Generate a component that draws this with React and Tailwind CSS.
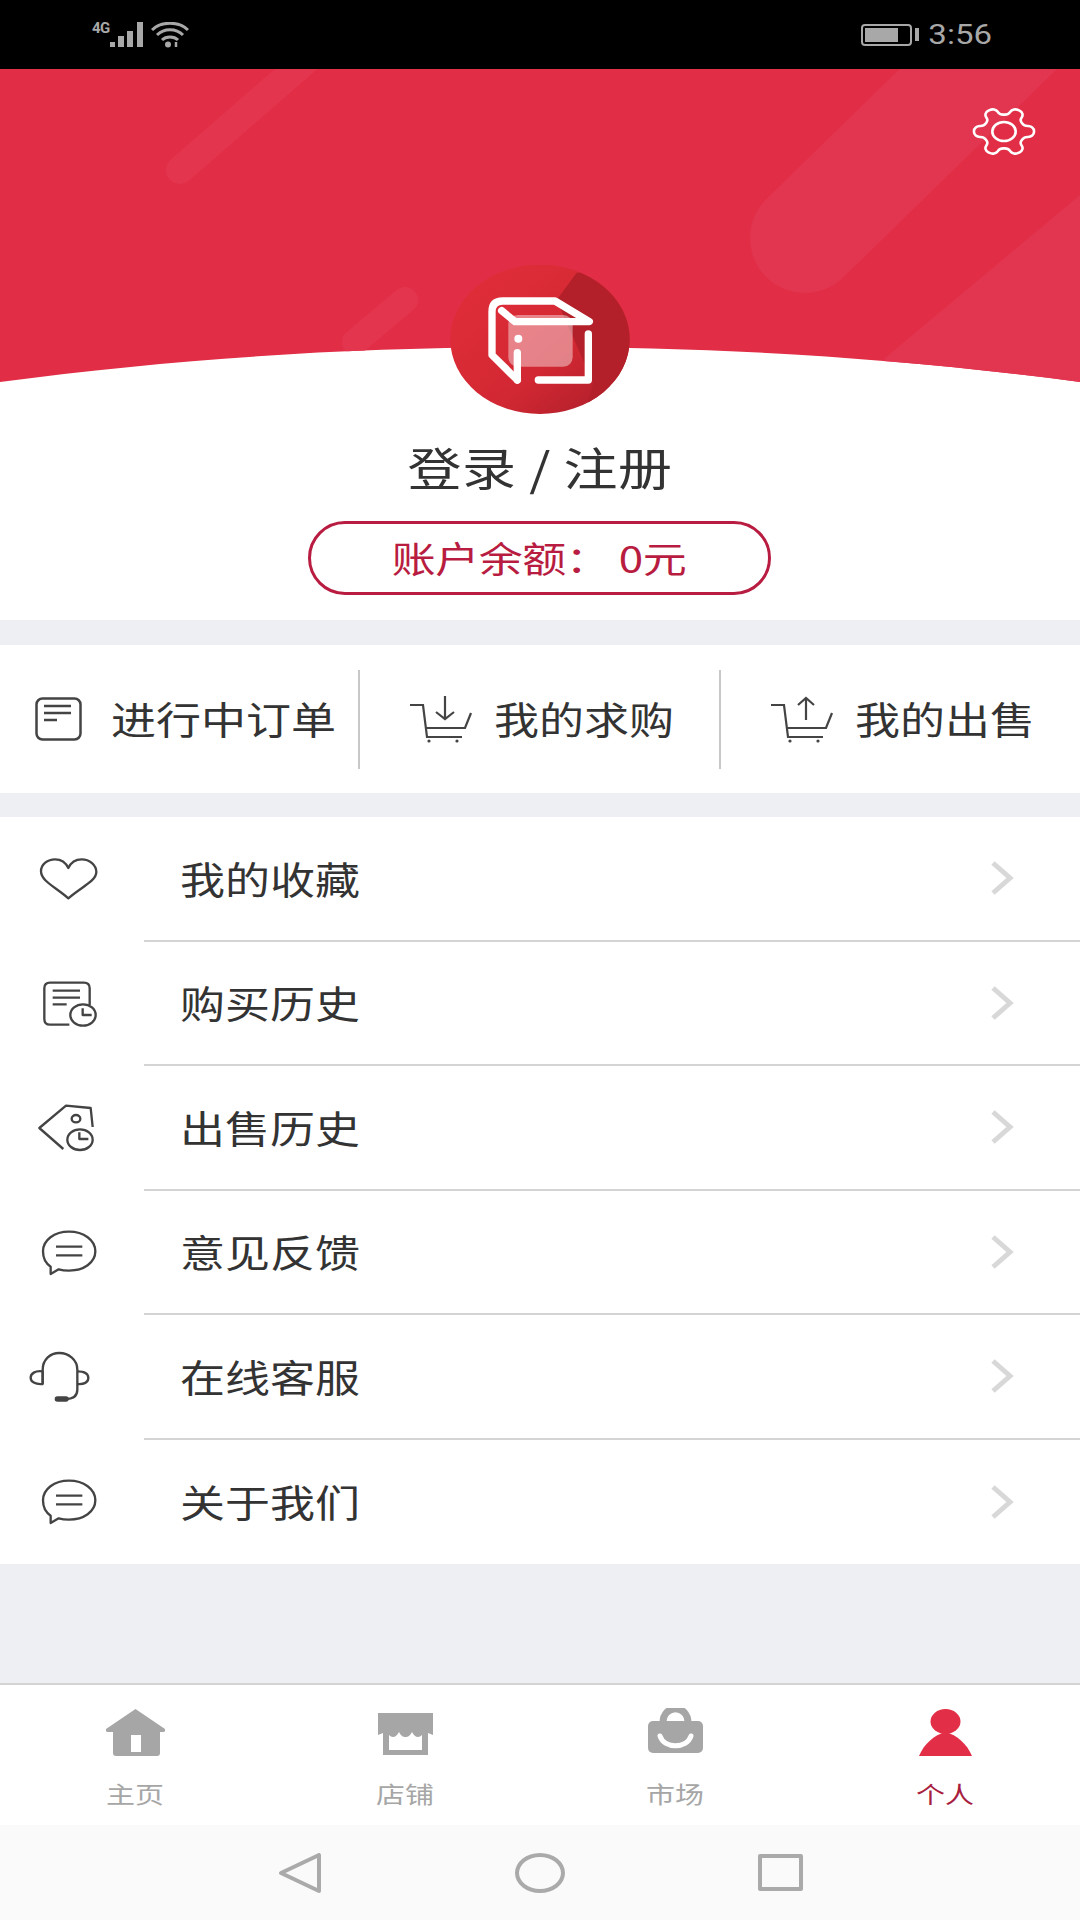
import React from 'react';

const GEAR = 'M12.22 2h-.44a2 2 0 0 0-2 2v.18a2 2 0 0 1-1 1.73l-.43.25a2 2 0 0 1-2 0l-.15-.08a2 2 0 0 0-2.73.73l-.22.38a2 2 0 0 0 .73 2.73l.15.1a2 2 0 0 1 1 1.72v.51a2 2 0 0 1-1 1.74l-.15.09a2 2 0 0 0-.73 2.73l.22.38a2 2 0 0 0 2.73.73l.15-.08a2 2 0 0 1 2 0l.43.25a2 2 0 0 1 1 1.73V20a2 2 0 0 0 2 2h.44a2 2 0 0 0 2-2v-.18a2 2 0 0 1 1-1.73l.43-.25a2 2 0 0 1 2 0l.15.08a2 2 0 0 0 2.73-.73l.22-.39a2 2 0 0 0-.73-2.73l-.15-.08a2 2 0 0 1-1-1.74v-.5a2 2 0 0 1 1-1.74l.15-.09a2 2 0 0 0 .73-2.73l-.22-.38a2 2 0 0 0-2.73-.73l-.15.08a2 2 0 0 1-2 0l-.43-.25a2 2 0 0 1-1-1.73V4a2 2 0 0 0-2-2z';

const BUBBLE = (
    <>
        <path d="M152 220 L152 198 C135 187 129 170 129 152 C129 118 163 93 207 93 C251 93 286 118 286 152 C286 186 251 210 207 210 C196 210 186 209 176 206 Z" />
        <path d="M168 138 H247 M168 164 H247" />
    </>
);

// row icons are drawn at 3x, the viewBox is centred on the row
const rows = [
    {
        label: '我的收藏',
        box: '0 -37 432 372',
        icon: <path d="M205 207 C165 172 123 155 123 126 C123 105 143 90 165 90 C183 90 198 101 205 116 C212 101 227 90 245 90 C269 90 289 107 289 128 C289 155 245 172 205 207 Z" />,
    },
    {
        label: '购买历史',
        box: '0 336 432 372',
        icon: (
            <>
                <path d="M208 584 H150 Q133 584 133 567 V475 Q133 458 150 458 H252 Q269 458 269 475 V525" />
                <path d="M158 482 H240 M158 503 H240 M158 523 H200" />
                <ellipse cx="249" cy="555" rx="38" ry="32" />
                <path d="M248 535 V555 H275" />
            </>
        ),
    },
    {
        label: '出售历史',
        box: '0 709 432 372',
        icon: (
            <>
                <path d="M190 958 L118 895 L198 828 L272 835 L278 892" />
                <ellipse cx="228" cy="867" rx="13" ry="11" />
                <ellipse cx="240" cy="930" rx="38" ry="31" />
                <path d="M238 908 V928 H265" />
            </>
        ),
    },
    { label: '意见反馈', box: '0 -29 432 372', icon: BUBBLE },
    {
        label: '在线客服',
        box: '0 346 432 372',
        icon: (
            <>
                <path d="M128 552 V510 C128 480 150 460 178 460 C206 460 232 480 232 510 V570 C232 590 220 598 195 598" />
                <path d="M128 515 C105 512 92 522 92 534 C92 546 105 555 128 553 Z" />
                <path d="M232 515 C252 515 265 522 265 535 C265 548 252 555 232 553" />
                <path d="M172 598 H198" strokeWidth="16" strokeLinecap="round" />
            </>
        ),
    },
    { label: '关于我们', box: '0 -29 432 372', icon: BUBBLE },
];

function HeaderArt() {
    return (
        <svg className="absolute top-0 left-0" width="1080" height="345" viewBox="0 69 1080 345">
            <defs>
                <clipPath id="head">
                    <path d="M0 382 C180 358 360 347 540 347 C720 347 900 358 1080 382 V69 H0 Z" />
                </clipPath>
            </defs>
            <g clipPath="url(#head)">
                <rect x="0" y="69" width="1080" height="345" fill="#e12d45" />
                <path d="M180 170 L318 50" stroke="#e3354e" strokeWidth="28" strokeLinecap="round" />
                <path d="M805 238 L1090 -40" stroke="#e23650" strokeWidth="110" strokeLinecap="round" />
                <path d="M885 358 L1080 195 V420 H885 Z" fill="#e23650" />
                <path d="M355 342 L405 300" stroke="#e3354e" strokeWidth="26" strokeLinecap="round" />
            </g>
        </svg>
    );
}

function Avatar() {
    return (
        <svg className="relative" width="180" height="150" viewBox="210 75 540 450">
            <defs>
                <linearGradient id="av" x1="0" y1="0" x2="1" y2="1">
                    <stop offset="0" stopColor="#e32f3a" />
                    <stop offset="0.6" stopColor="#d22833" />
                    <stop offset="1" stopColor="#a81d28" />
                </linearGradient>
                <clipPath id="disc">
                    <ellipse cx="480" cy="298" rx="269" ry="224" />
                </clipPath>
            </defs>
            <ellipse cx="480" cy="298" rx="269" ry="224" fill="url(#av)" />
            <path clipPath="url(#disc)" d="M590 98 L530 180 L640 430 L620 500 L760 520 L760 90 Z" fill="#b32029" />
            <rect x="385" y="225" width="193" height="155" rx="28" fill="#ffffff" fillOpacity="0.42" />
            <g fill="none" stroke="#ffffff" strokeWidth="22" strokeLinecap="round" strokeLinejoin="round">
                <path d="M412 420 L336 345 V215 Q336 183 368 183 H525 L628 245 H405 L365 212" />
                <path d="M625 282 V420 H475" />
                <path d="M412 338 V420" />
            </g>
            <circle cx="415" cy="296" r="12" fill="#ffffff" />
        </svg>
    );
}

function Cart({ up }) {
    return (
        <svg width="63" height="47" viewBox="0 0 63 47" fill="none" stroke="#444444" strokeWidth="2.2">
            <path d="M0 9 H13 L17 41 H52 M15 32 H55 L61 17" />
            <circle cx="19" cy="45" r="1.6" fill="#444444" stroke="none" />
            <circle cx="47" cy="45" r="1.6" fill="#444444" stroke="none" />
            {up ? <path d="M35 24 V2 M27 9 L35 2 L43 9" /> : <path d="M35 0 V23 M26 16 L35 23 L44 16" />}
        </svg>
    );
}

function StatusBar() {
    return (
        <div className="h-[69px] bg-black flex items-center justify-between pl-[92px] pr-[88px] text-[#a8a8a8]">
            <div className="flex items-start">
                <span className="block text-[15px] leading-[13px] font-bold font-['Roboto',sans-serif] w-[19px] tracking-[-0.5px]">4G</span>
                <svg width="36" height="26" viewBox="2 0 36 26" fill="#a8a8a8" className="-ml-[1px]">
                    <rect x="2" y="20" width="5" height="5" />
                    <rect x="10" y="14" width="6" height="11" />
                    <rect x="19" y="9" width="6" height="16" />
                    <rect x="29" y="0" width="6" height="25" />
                </svg>
                <svg width="38" height="26" viewBox="0 0 38 26" fill="none" stroke="#a8a8a8" strokeWidth="3" className="ml-[5px]">
                    <path d="M1 8 C10 -1 28 -1 37 8 M6 13 C13 6 25 6 32 13 M11 18 C15 14 23 14 27 18" />
                    <circle cx="17" cy="22.5" r="3" fill="#a8a8a8" stroke="none" />
                    <path d="M25 20 V25" strokeWidth="2.5" />
                </svg>
            </div>
            <div className="flex items-center">
                <div className="w-[51px] h-[22px] rounded-[4px] border-2 border-[#a8a8a8] p-[2px]">
                    <div className="w-[33px] h-full bg-[#a8a8a8]" />
                </div>
                <div className="w-[4px] h-[13px] bg-[#a8a8a8] ml-[3px]" />
                <span className="block ml-[9px] text-[33px] leading-none font-['Roboto',sans-serif] scale-y-[0.86]">3:56</span>
            </div>
        </div>
    );
}

function Profile() {
    return (
        <section className="relative h-[551px] bg-white flex flex-col items-center">
            <HeaderArt />
            <svg className="relative self-end mt-[38px] mr-[46px] overflow-visible" width="60" height="49" viewBox="2 2 20 20" preserveAspectRatio="none" fill="none" stroke="#ffffff">
                <g transform="rotate(90 12 12)">
                    <path d={GEAR} strokeWidth="2.6" vectorEffect="non-scaling-stroke" />
                </g>
                <circle cx="12" cy="12" r="3.9" strokeWidth="2.6" vectorEffect="non-scaling-stroke" />
            </svg>
            <div className="mt-[109px]">
                <Avatar />
            </div>
            <h1 className="relative mt-[22px] h-[60px] leading-[60px] text-[54px] font-normal text-[#333333] scale-y-[0.84] tracking-[0.5px]">登录 / 注册</h1>
            <div className="mt-[24px] -ml-[2px] w-[463px] h-[74px] rounded-full border-[3px] border-[#b81c40] flex items-center justify-center">
                <span className="block pb-[2px] text-[44px] leading-none text-[#b81c40] scale-y-[0.82] tracking-[-0.5px]">账户余额： 0元</span>
            </div>
        </section>
    );
}

function QuickLinks() {
    return (
        <section className="mt-[25px] h-[148px] bg-white grid grid-cols-[360px_361px_359px] items-center">
            <div className="h-[99px] border-r-2 border-[#c8c8c8] flex items-center pl-[35px] gap-[29px]">
                <svg width="47" height="44" viewBox="0 0 47 44" fill="none" stroke="#444444" strokeWidth="2.5">
                    <rect x="1.5" y="1.5" width="44" height="41" rx="6" />
                    <path d="M9 9 H36 M9 16 H36 M9 23 H22" />
                </svg>
                <span className="block pb-[4px] text-[45px] leading-none text-[#333333] scale-y-[0.84]">进行中订单</span>
            </div>
            <div className="h-[99px] border-r-2 border-[#c8c8c8] flex items-center pl-[50px] gap-[21px]">
                <Cart />
                <span className="block pb-[4px] text-[45px] leading-none text-[#333333] scale-y-[0.84]">我的求购</span>
            </div>
            <div className="h-[99px] flex items-center pl-[50px] gap-[21px]">
                <Cart up />
                <span className="block pb-[4px] text-[45px] leading-none text-[#333333] scale-y-[0.84]">我的出售</span>
            </div>
        </section>
    );
}

function MenuList() {
    return (
        <section className="mt-[24px] bg-white">
            {rows.map((row, i) => (
                <div key={row.label} className="h-[124.5px] flex items-center">
                    <svg className="shrink-0" width="144" height="124" viewBox={row.box} fill="none" stroke="#444444" strokeWidth="7" strokeLinejoin="round">
                        {row.icon}
                    </svg>
                    <div className={i < rows.length - 1
                        ? 'flex-1 h-full border-b-2 border-[#d4d4d4] flex items-center justify-between pl-[36px] pr-[66px]'
                        : 'flex-1 h-full flex items-center justify-between pl-[36px] pr-[66px]'}>
                        <span className="block pb-[2px] text-[45px] leading-none text-[#333333] scale-y-[0.84]">{row.label}</span>
                        <svg width="24" height="34" viewBox="0 0 24 34" fill="none" stroke="#d8d8d8" strokeWidth="5">
                            <path d="M3 2 L20 17 L3 32" />
                        </svg>
                    </div>
                </div>
            ))}
        </section>
    );
}

function TabBar() {
    return (
        <nav className="h-[142px] bg-white border-t-2 border-[#d4d4d4] grid grid-cols-4">
            <div className="flex flex-col items-center">
                <div className="h-[72px] flex items-end">
                    <svg width="59" height="48" viewBox="0 0 59 48" fill="#a6a6a6">
                        <path fillRule="evenodd" d="M29.5 0 L59 20 Q60 23 57 23 H54 V44 Q54 47 51 47 H10 Q7 47 7 44 V23 H2 Q-1 23 0 20 Z M25 26 V43 H35 V26 Z" />
                    </svg>
                </div>
                <span className="block mt-[21px] text-[29px] leading-none text-[#a6a6a6] scale-y-[0.8]">主页</span>
            </div>
            <div className="flex flex-col items-center">
                <div className="h-[72px] flex items-end pb-[2px]">
                    <svg width="55" height="42" viewBox="0 0 55 42" fill="#a6a6a6">
                        <path fillRule="evenodd" d="M0 0 H55 V22 L50 20 V42 H5 V20 L0 22 Z M11 37 H44 V22 C41 25 37 25 34 19 C32 23 30 24 27.5 24 C25 24 23 23 21 19 C18 25 14 25 11 22 Z" />
                    </svg>
                </div>
                <span className="block mt-[21px] text-[29px] leading-none text-[#a6a6a6] scale-y-[0.8]">店铺</span>
            </div>
            <div className="flex flex-col items-center">
                <div className="h-[72px] flex items-end pb-[3px]">
                    <svg width="55" height="46" viewBox="0 0 55 46" fill="#a6a6a6">
                        <path d="M15 15 C15 -4 40 -4 40 15" fill="none" stroke="#a6a6a6" strokeWidth="7" />
                        <rect x="0" y="13" width="55" height="32" rx="5" />
                        <path d="M12 28 C16 41 39 41 43 28" fill="none" stroke="#ffffff" strokeWidth="5" strokeLinecap="round" />
                    </svg>
                </div>
                <span className="block mt-[21px] text-[29px] leading-none text-[#a6a6a6] scale-y-[0.8]">市场</span>
            </div>
            <div className="flex flex-col items-center">
                <div className="h-[72px] flex items-end">
                    <svg width="53" height="48" viewBox="0 0 53 48" fill="#e22e46">
                        <ellipse cx="26.5" cy="12.5" rx="15" ry="12.5" />
                        <path d="M0 47 C5 35 15 26 26.5 23 C38 26 48 35 53 47 Z" />
                    </svg>
                </div>
                <span className="block mt-[21px] text-[29px] leading-none text-[#a81e3f] scale-y-[0.8]">个人</span>
            </div>
        </nav>
    );
}

function NavBar() {
    return (
        <div className="h-[95px] bg-[#fafafa] flex items-center justify-center gap-[193px] pl-[2px]">
            <svg width="43" height="40" viewBox="0 0 43 40" fill="none" stroke="#aaaaaa" strokeWidth="4" strokeLinejoin="round">
                <path d="M40 2 V38 L2 20 Z" />
            </svg>
            <div className="w-[50px] h-[40px] rounded-[50%] border-[4px] border-[#aaaaaa]" />
            <div className="w-[45px] h-[37px] rounded-[2px] border-[4px] border-[#aaaaaa]" />
        </div>
    );
}

export default function App() {
    return (
        <div className="w-[1080px] h-[1920px] overflow-hidden flex flex-col bg-[#eeeff3] font-['Noto_Sans_CJK_SC',sans-serif]">
            <StatusBar />
            <Profile />
            <QuickLinks />
            <MenuList />
            <div className="flex-1" />
            <TabBar />
            <NavBar />
        </div>
    );
}
